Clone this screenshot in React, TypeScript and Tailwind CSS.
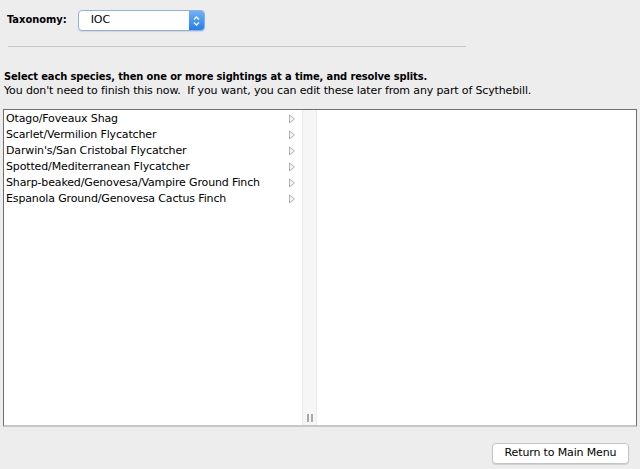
import React from "react";

const species = [
  "Otago/Foveaux Shag",
  "Scarlet/Vermilion Flycatcher",
  "Darwin's/San Cristobal Flycatcher",
  "Spotted/Mediterranean Flycatcher",
  "Sharp-beaked/Genovesa/Vampire Ground Finch",
  "Espanola Ground/Genovesa Cactus Finch",
];

const boldFont = { fontFamily: '"DejaVu Sans Condensed", "DejaVu Sans", sans-serif' };

function Arrow() {
  return (
    <svg width="8" height="10" viewBox="0 0 8 10" className="shrink-0">
      <path d="M1.5 1 L6.5 5 L1.5 9 Z" fill="#f4f4f4" stroke="#b4b4b4" strokeWidth="1" strokeLinejoin="round" />
    </svg>
  );
}

export default function App() {
  return (
    <div
      className="w-[640px] h-[469px] bg-[#ededed] flex flex-col text-[11px] tracking-[-0.14px] text-black overflow-hidden"
      style={{ fontFamily: '"DejaVu Sans", Verdana, sans-serif' }}
    >
      <div className="flex items-center pt-[10px] pl-[7px] h-[31px]">
        <span className="font-bold tracking-normal" style={boldFont}>Taxonomy:</span>
        <div className="ml-[11px] w-[127px] h-[21px] flex rounded-[4px] border border-[#8fb1dd] bg-white shadow-[0_1px_1px_rgba(0,0,0,0.1)] overflow-hidden">
          <div className="flex-1 flex items-center pl-[12px]">IOC</div>
          <div className="w-[15px] h-full bg-gradient-to-b from-[#6fb0f7] to-[#1f7ef0] flex items-center justify-center">
            <svg width="7" height="12" viewBox="0 0 7 12">
              <path d="M1 4.5 L3.5 2 L6 4.5" fill="none" stroke="white" strokeWidth="1.3" />
              <path d="M1 7.5 L3.5 10 L6 7.5" fill="none" stroke="white" strokeWidth="1.3" />
            </svg>
          </div>
        </div>
      </div>
      <div className="ml-[8px] mt-[15px] w-[458px] h-px bg-[#c9c9c9]" />
      <div className="pl-[4px] mt-[23px] leading-[14px]">
        <div className="font-bold tracking-[-0.11px]" style={boldFont}>
          Select each species, then one or more sightings at a time, and resolve splits.
        </div>
        <div>You don't need to finish this now.&nbsp; If you want, you can edit these later from any part of Scythebill.</div>
      </div>
      <div className="mx-[3px] mt-[11px] h-[318px] flex bg-white border-t border-l border-r border-[#6e6e6e] border-b-2 border-b-[#c6c6c6]">
        <div className="w-[298px] pt-[1px] flex flex-col">
          {species.map((s) => (
            <div key={s} className="h-[16px] flex items-center pl-[2px] pr-[6px]">
              <span className="flex-1 whitespace-nowrap">{s}</span>
              <Arrow />
            </div>
          ))}
        </div>
        <div className="w-[15px] bg-[#f6f6f6] border-l border-r border-[#ececec] flex flex-col justify-end items-center pb-[3px]">
          <div className="flex gap-[2px]">
            <div className="w-[2px] h-[8px] bg-[#a8a8a8]" />
            <div className="w-[2px] h-[8px] bg-[#a8a8a8]" />
          </div>
        </div>
        <div className="flex-1" />
      </div>
      <div className="flex justify-end pr-[11px] mt-[16px]">
        <button className="w-[137px] h-[21px] bg-white rounded-[4px] border border-[#c4c4c4] shadow-[0_1px_1px_rgba(0,0,0,0.12)] text-[11px]">
          Return to Main Menu
        </button>
      </div>
    </div>
  );
}
